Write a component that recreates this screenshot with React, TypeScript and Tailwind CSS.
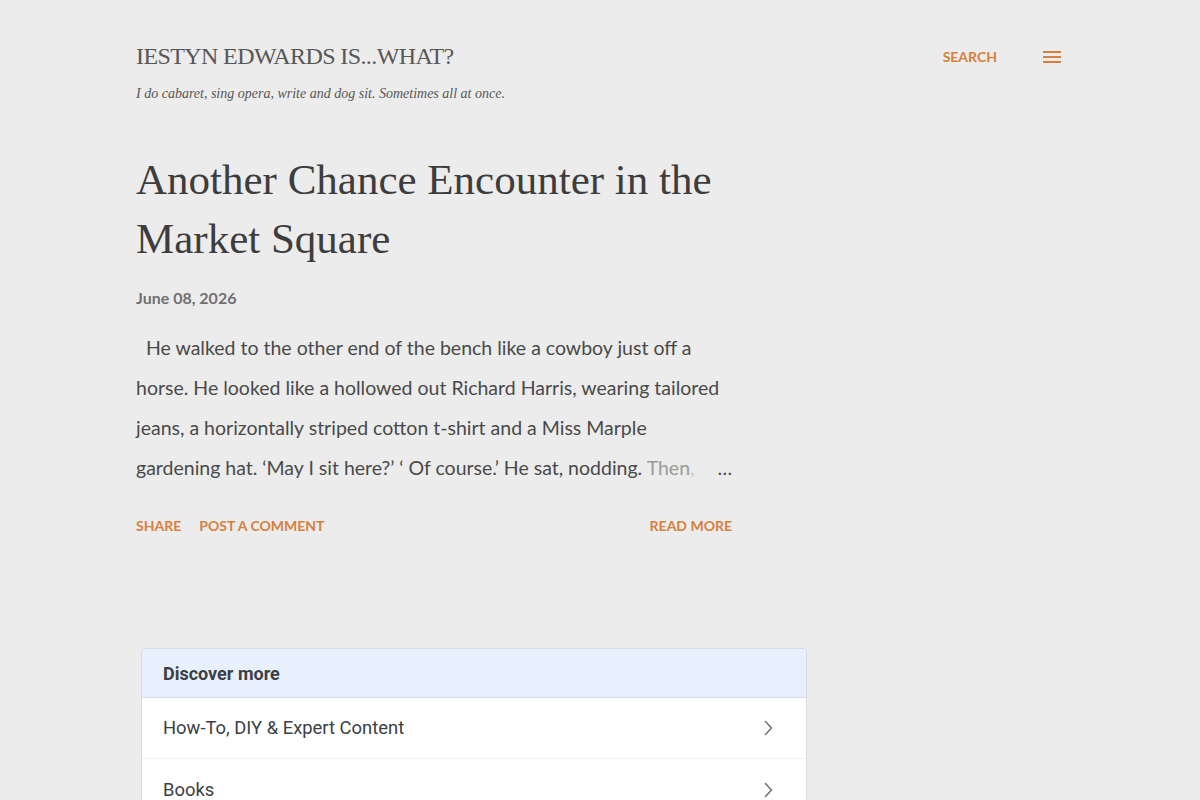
import React from "react";

const serif = { fontFamily: '"Liberation Serif", "DejaVu Serif", serif' };

function Chevron() {
  return (
    <svg width="24" height="24" viewBox="0 0 24 24" fill="none" stroke="#70757a" strokeWidth="1.6" strokeLinecap="round" strokeLinejoin="round">
      <path d="M9.5 5.5 L15.5 12 L9.5 18.5" />
    </svg>
  );
}

export default function App() {
  return (
    <div className="h-[800px] w-full bg-[#ececec] overflow-hidden" style={{ fontFamily: 'Lato, "Liberation Sans", sans-serif' }}>
      <div className="w-[928px] ml-[136px]">
        {/* Header */}
        <header className="flex items-start justify-between pt-[42px]">
          <div>
            <h1 className="text-[24px] leading-[28px] text-[#575757] tracking-[-0.6px]" style={serif}>IESTYN EDWARDS IS...WHAT?</h1>
            <p className="mt-[16px] text-[14px] leading-[16px] italic text-[#575757]" style={serif}>I do cabaret, sing opera, write and dog sit. Sometimes all at once.</p>
          </div>
          <div className="flex items-center gap-[45px] pt-[4px] pr-[2px]">
            <span className="text-[14px] font-bold text-[#d6803c]">SEARCH</span>
            <svg width="20" height="14" viewBox="0 0 20 14">
              <rect x="1" y="1" width="18" height="2" fill="#d6803c" />
              <rect x="1" y="6" width="18" height="2" fill="#d6803c" />
              <rect x="1" y="11" width="18" height="2" fill="#d6803c" />
            </svg>
          </div>
        </header>

        {/* Post */}
        <article className="w-[596px] mt-[48px]">
          <h2 className="text-[43px] leading-[59px] text-[#3d3d3d] whitespace-nowrap" style={serif}>
            <div>Another Chance Encounter in the</div>
            <div>Market Square</div>
          </h2>
          <div className="mt-[18px] text-[16px] font-bold text-[#707070]">June 08, 2026</div>
          <div className="mt-[18px] text-[19.5px] leading-[40px] text-[#4a4a4a] whitespace-nowrap">
            <div>&nbsp;&nbsp;He walked to the other end of the bench like a cowboy just off a</div>
            <div>horse. He looked like a hollowed out Richard Harris, wearing tailored</div>
            <div>jeans, a horizontally striped cotton t-shirt and a Miss Marple</div>
            <div className="flex justify-between">
              <span>
                gardening hat. ‘May I sit here?’ ‘ Of course.’ He sat, nodding.{" "}
                <span className="text-[#9a9a9a]">Then</span><span className="text-[#c8c8c8]">,</span>
              </span>
              <span>…</span>
            </div>
          </div>
          <div className="mt-[27px] flex items-center justify-between text-[14px] font-bold text-[#d6803c]">
            <div className="flex gap-[18px]">
              <span>SHARE</span>
              <span>POST A COMMENT</span>
            </div>
            <span>READ MORE</span>
          </div>
        </article>

        {/* Discover more */}
        <div className="mt-[112px] ml-[5px] w-[666px] rounded-t-[4px] border border-[#d7dbe0] bg-white overflow-hidden" style={{ fontFamily: 'Roboto, "Liberation Sans", sans-serif' }}>
          <div className="h-[49px] bg-[#e8f0fe] border-b border-[#d3dbe8] flex items-center px-[21px]">
            <span className="text-[18px] font-bold text-[#3c4043]">Discover more</span>
          </div>
          <div className="h-[61px] flex items-center justify-between pl-[21px] pr-[26px] border-b border-[#f1f1f1]">
            <span className="text-[18.4px] text-[#3c4043]">How-To, DIY &amp; Expert Content</span>
            <Chevron />
          </div>
          <div className="h-[61px] flex items-center justify-between pl-[21px] pr-[26px]">
            <span className="text-[18.4px] text-[#3c4043]">Books</span>
            <Chevron />
          </div>
        </div>
      </div>
    </div>
  );
}
